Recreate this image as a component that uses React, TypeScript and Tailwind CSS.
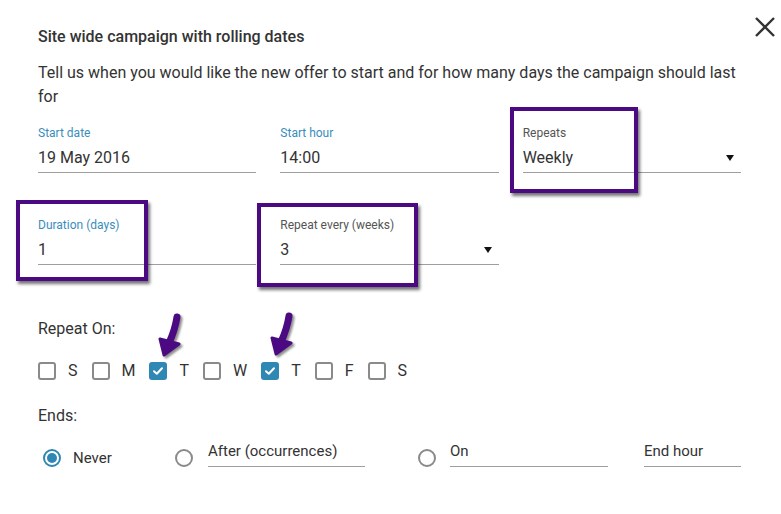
import React from "react";

const font = { fontFamily: "Roboto, 'Liberation Sans', sans-serif" };

function Field({ label, value, active, select }: { label: string; value: string; active?: boolean; select?: boolean }) {
  return (
    <div className="flex flex-col">
      <div className={`text-[12px] leading-4 ${active ? "text-[#3a8dbb]" : "text-[#555]"}`}>{label}</div>
      <div className="flex items-center justify-between border-b border-[#9e9e9e] h-[32px] pt-[2px]">
        <span className="text-[16px] leading-6 text-[#333]">{value}</span>
        {select && (
          <svg width="10" height="6" viewBox="0 0 10 6" className="mr-[6px]">
            <path d="M1 0 L9 0 L5 6 Z" fill="#111" />
          </svg>
        )}
      </div>
    </div>
  );
}

function Box({ checked, day }: { checked?: boolean; day: string }) {
  return (
    <div className="flex items-center mr-[14px]">
      {checked ? (
        <div className="w-[18px] h-[18px] rounded-[3px] bg-[#2f87b3] flex items-center justify-center">
          <svg width="12" height="10" viewBox="0 0 12 10">
            <path d="M2 5.2 L4.8 7.8 L10 2.2" stroke="#fff" strokeWidth="2" fill="none" strokeLinecap="round" strokeLinejoin="round" />
          </svg>
        </div>
      ) : (
        <div className="w-[18px] h-[18px] rounded-[3px] border-2 border-[#8a8a8a] bg-white" />
      )}
      <span className="ml-[12px] text-[16px] text-[#333]">{day}</span>
    </div>
  );
}

function Radio({ on }: { on?: boolean }) {
  return on ? (
    <div className="w-[18px] h-[18px] rounded-full border-2 border-[#2f87b3] flex items-center justify-center">
      <div className="w-[10px] h-[10px] rounded-full bg-[#2f87b3]" />
    </div>
  ) : (
    <div className="w-[18px] h-[18px] rounded-full border-2 border-[#8a8a8a]" />
  );
}

function Arrow({ left, top }: { left: number; top: number }) {
  return (
    <svg
      width="32"
      height="48"
      viewBox="0 0 32 48"
      className="absolute drop-shadow-[2px_2px_1px_rgba(0,0,0,0.45)]"
      style={{ left, top }}
    >
      <path d="M23 7 Q21 20 15 33" stroke="#4b0a82" strokeWidth="7" fill="none" strokeLinecap="round" />
      <path d="M6 29 L25 34 L10 45 Z" fill="#4b0a82" stroke="#4b0a82" strokeWidth="3" strokeLinejoin="round" />
    </svg>
  );
}

const annot = "absolute border-4 border-[#4b0a82] shadow-[2px_3px_3px_rgba(0,0,0,0.55)] pointer-events-none";

export default function App() {
  return (
    <div className="relative w-[781px] h-[514px] bg-white overflow-hidden" style={font}>
      <button className="absolute left-[755px] top-[17px]">
        <svg width="20" height="20" viewBox="0 0 20 20">
          <path d="M1 1 L19 19 M19 1 L1 19" stroke="#333" strokeWidth="2.4" />
        </svg>
      </button>

      <div className="pl-[38px] pt-[27px] w-[741px]">
        <h2 className="text-[16px] leading-5 font-medium text-[#333]">Site wide campaign with rolling dates</h2>
        <p className="mt-[14px] text-[16px] leading-6 text-[#333]">
          Tell us when you would like the new offer to start and for how many days the campaign should last for
        </p>

        <div className="mt-[16px] grid grid-cols-3 gap-x-[24px] gap-y-[44px]">
          <Field label="Start date" value="19 May 2016" active />
          <Field label="Start hour" value="14:00" active />
          <Field label="Repeats" value="Weekly" select />
          <Field label="Duration (days)" value="1" active />
          <Field label="Repeat every (weeks)" value="3" select />
        </div>

        <div className="mt-[52px] text-[16px] leading-6 text-[#333]">Repeat On:</div>
        <div className="mt-[18px] flex items-center h-[24px]">
          <Box day="S" />
          <Box day="M" />
          <Box day="T" checked />
          <Box day="W" />
          <Box day="T" checked />
          <Box day="F" />
          <Box day="S" />
        </div>

        <div className="mt-[21px] text-[16px] leading-6 text-[#333]">Ends:</div>
        <div className="mt-[13px] flex items-end text-[15px] text-[#333]">
          <div className="flex items-center w-[137px] pl-[5px] h-[18px]">
            <Radio on />
            <span className="ml-[12px] leading-5">Never</span>
          </div>
          <Radio />
          <div className="ml-[15px] w-[157px] border-b border-[#9e9e9e] h-[26px] leading-5">After (occurrences)</div>
          <div className="ml-[53px]">
            <Radio />
          </div>
          <div className="ml-[14px] w-[158px] border-b border-[#9e9e9e] h-[26px] leading-5">On</div>
          <div className="ml-[36px] w-[97px] border-b border-[#9e9e9e] h-[26px] leading-5">End hour</div>
        </div>
      </div>

      <div className={annot} style={{ left: 510, top: 107, width: 128, height: 86 }} />
      <div className={annot} style={{ left: 16, top: 200, width: 132, height: 81 }} />
      <div className={annot} style={{ left: 257, top: 203, width: 161, height: 84 }} />
      <Arrow left={154} top={310} />
      <Arrow left={266} top={309} />
    </div>
  );
}
